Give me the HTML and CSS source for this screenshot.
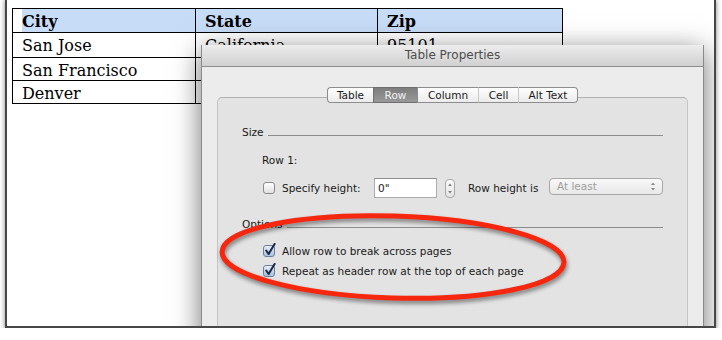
FILE: index.html
```html
<!DOCTYPE html>
<html>
<head>
<meta charset="utf-8">
<title>Table Properties</title>
<link rel="stylesheet" href="styles.css">
</head>
<body>
<div class="shot">
  <div class="doc-table">
    <div class="cell head city">City</div>
    <div class="cell head">State</div>
    <div class="cell head">Zip</div>
    <div class="cell">San Jose</div>
    <div class="cell">California</div>
    <div class="cell">95101</div>
    <div class="cell">San Francisco</div>
    <div class="cell"></div>
    <div class="cell"></div>
    <div class="cell">Denver</div>
    <div class="cell"></div>
    <div class="cell"></div>
  </div>

  <div class="dialog">
    <div class="titlebar">Table Properties</div>
    <div class="dialog-body">
      <div class="tabs">
        <div class="tab t-table">Table</div>
        <div class="tab t-row selected">Row</div>
        <div class="tab t-column">Column</div>
        <div class="tab t-cell">Cell</div>
        <div class="tab t-alt">Alt Text</div>
      </div>
      <div class="panel">
        <div class="section-head"><span>Size</span><span class="rule"></span></div>
        <div class="row-label">Row 1:</div>
        <div class="control-row">
          <span class="cb"></span>
          <span class="lbl lbl-specify">Specify height:</span>
          <span class="field">0"</span>
          <span class="stepper">
            <svg width="10" height="19" viewBox="0 0 10 19"><path d="M3.2 7 L5 4.6 L6.8 7 Z" fill="#7a7a7a"/><path d="M3.2 12 L5 14.4 L6.8 12 Z" fill="#7a7a7a"/></svg>
          </span>
          <span class="lbl lbl-rowh">Row height is</span>
          <span class="popup"><span>At least</span>
            <svg width="6" height="11" viewBox="0 0 6 11"><path d="M1 4 L3 1.5 L5 4 Z" fill="#8a8a8a"/><path d="M1 7 L3 9.5 L5 7 Z" fill="#8a8a8a"/></svg>
          </span>
        </div>
        <div class="section-head options-head"><span>Options</span><span class="rule"></span></div>
        <div class="check-row first">
          <span class="cb checked"><svg width="12" height="15" viewBox="0 0 12 15"><path d="M2.2 8.5 L4.6 12 L10.6 2" fill="none" stroke="#1d2a4b" stroke-width="2.1" stroke-linecap="round" stroke-linejoin="round"/></svg></span>
          <span class="lbl">Allow row to break across pages</span>
        </div>
        <div class="check-row">
          <span class="cb checked"><svg width="12" height="15" viewBox="0 0 12 15"><path d="M2.2 8.5 L4.6 12 L10.6 2" fill="none" stroke="#1d2a4b" stroke-width="2.1" stroke-linecap="round" stroke-linejoin="round"/></svg></span>
          <span class="lbl">Repeat as header row at the top of each page</span>
        </div>
      </div>
    </div>
  </div>

  <svg class="callout" width="372" height="115" viewBox="0 0 372 115">
    <ellipse cx="183" cy="57" rx="171" ry="41" transform="rotate(1.8 183 57)" fill="none" stroke="#f5280f" stroke-width="5"/>
  </svg>
</div>
</body>
</html>
```
FILE: styles.css
```css
* { box-sizing: border-box; }

body {
  margin: 0;
  background: #fff;
  font-family: "DejaVu Sans", sans-serif;
}

.shot {
  position: relative;
  margin: -2px 0 0 5px;
  width: 711px;
  height: 330px;
  border: 2px solid #474747;
  background: #fff;
  overflow: hidden;
  box-shadow: 0 2px 5px rgba(0, 0, 0, 0.5);
}

/* document table */
.doc-table {
  display: grid;
  grid-template-columns: 183px 182px 185px;
  grid-template-rows: 24px 25px 23px 23px;
  width: 551px;
  margin: 8px 0 0 5px;
  border-left: 1px solid #000;
  border-top: 1px solid #000;
  font-family: "DejaVu Serif", serif;
  font-size: 16px;
  color: #000;
}

.cell {
  border-right: 1px solid #000;
  border-bottom: 1px solid #000;
  padding: 4px 0 0 9px;
  line-height: 18px;
  white-space: nowrap;
  overflow: hidden;
}

.head {
  font-weight: bold;
  background: #c7dcf6;
}

.city {
  background: linear-gradient(to right, #fff 9px, #c7dcf6 9px);
}

/* dialog sheet */
.dialog {
  position: absolute;
  left: 194px;
  top: 45px;
  width: 503px;
  height: 300px;
  background: #ececec;
  border-left: 1px solid #8a8a8a;
  border-right: 1px solid #8a8a8a;
  box-shadow: 0 6px 26px rgba(0, 0, 0, 0.55);
}

.titlebar {
  height: 22px;
  background: linear-gradient(#ededed, #d0d0d0);
  border-bottom: 1px solid #8f8f8f;
  text-align: center;
  font-size: 12px;
  line-height: 21px;
  color: #4d4d4d;
}

.dialog-body {
  padding: 20px 15px 0;
}

.tabs {
  position: relative;
  z-index: 1;
  display: flex;
  justify-content: center;
  height: 16px;
  margin-bottom: -6px;
}

.tab {
  height: 16px;
  border: 1px solid #8d8d8d;
  border-left: 1px solid #c6c6c6;
  border-right: none;
  background: linear-gradient(#fefefe, #ebebeb);
  font-size: 10.5px;
  line-height: 14px;
  text-align: center;
  color: #1a1a1a;
}

.t-table { width: 46px; border-left-color: #8d8d8d; border-radius: 4px 0 0 4px; }
.t-row { width: 44px; }
.t-column { width: 61px; border-left-color: #8d8d8d; }
.t-cell { width: 40px; }
.t-alt { width: 60px; border-right: 1px solid #8d8d8d; border-radius: 0 4px 4px 0; }

.tab.selected {
  background: linear-gradient(#7d7d7d, #989898);
  border-color: #6f6f6f;
  color: #f2f2f2;
}

.panel {
  height: 260px;
  background: #e3e3e3;
  border: 1px solid #c4c4c4;
  border-top-color: #b2b2b2;
  border-radius: 5px;
  padding: 28px 24px 0;
  font-size: 10.5px;
  color: #1a1a1a;
}

.section-head {
  display: flex;
  align-items: flex-end;
  gap: 4px;
  line-height: 13px;
}

.rule {
  flex: 1;
  height: 1px;
  background: #8c8c8c;
  margin-bottom: 3px;
}

.options-head {
  margin-top: 20px;
}

.row-label {
  margin: 15px 0 0 20px;
  line-height: 13px;
}

.control-row {
  display: flex;
  align-items: center;
  height: 20px;
  margin-top: 11px;
  padding-left: 21px;
}

.lbl {
  white-space: nowrap;
  line-height: 13px;
}

.lbl-specify { width: 75px; }
.lbl-rowh { width: 71px; margin-left: 13px; }

.cb {
  position: relative;
  flex: none;
  width: 12px;
  height: 12px;
  margin-right: 7px;
  border: 1px solid #8c8c8c;
  border-radius: 3px;
  background: linear-gradient(#ffffff, #e0e0e0);
}

.cb.checked {
  border-color: #6e7e98;
  background: linear-gradient(#e8eef8, #a9c0e0);
}

.cb svg {
  position: absolute;
  left: 0;
  top: -4px;
}

.field {
  width: 63px;
  height: 20px;
  margin-left: 17px;
  padding-left: 3px;
  border: 1px solid #ababab;
  border-top-color: #8e8e8e;
  background: #fff;
  line-height: 18px;
}

.stepper {
  display: block;
  width: 10px;
  height: 19px;
  margin-left: 8px;
  border: 1px solid #a8a8a8;
  border-radius: 4px;
  background: linear-gradient(#fafafa, #e4e4e4);
}

.stepper svg {
  display: block;
  margin: -1px 0 0 -1px;
}

.popup {
  align-self: flex-start;
  display: flex;
  align-items: center;
  justify-content: space-between;
  width: 114px;
  height: 17px;
  margin-left: 10px;
  padding: 0 6px 0 7px;
  border: 1px solid #a8a8a8;
  border-radius: 4px;
  background: linear-gradient(#f8f8f8, #e8e8e8);
  color: #9d9d9d;
  line-height: 15px;
}

.popup svg { display: block; }

.check-row {
  display: flex;
  align-items: center;
  height: 20px;
  padding-left: 21px;
}

.check-row.first {
  margin-top: 10px;
}

/* red callout ellipse drawn over the screenshot */
.callout {
  position: absolute;
  left: 203px;
  top: 200px;
  z-index: 2;
  filter: drop-shadow(1px 3px 2px rgba(0, 0, 0, 0.45));
}
```
